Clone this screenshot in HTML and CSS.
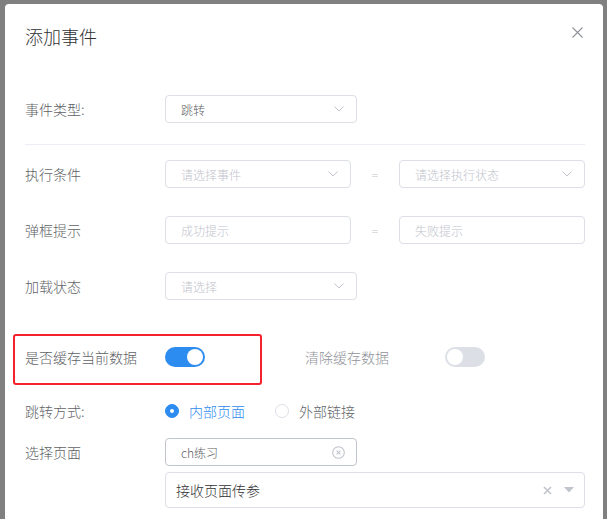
FILE: index.html
```html
<!DOCTYPE html>
<html lang="zh">
<head>
<meta charset="utf-8">
<title>添加事件</title>
<link rel="stylesheet" href="styles.css">
</head>
<body>
<div class="dialog">
  <div class="header">
    <span class="title">添加事件</span>
    <svg class="close" width="11" height="11" viewBox="0 0 11 11"><path d="M0.5 0.5L10.5 10.5M10.5 0.5L0.5 10.5" stroke="#909399" stroke-width="1.1" fill="none"/></svg>
  </div>

  <div class="row r1">
    <span class="label">事件类型:</span>
    <div class="select w192"><span class="val">跳转</span><svg class="chev" width="10" height="6" viewBox="0 0 10 6"><path d="M0.5 0.5L5 5L9.5 0.5" stroke="#c0c4cc" stroke-width="1" fill="none"/></svg></div>
  </div>

  <div class="divider"></div>

  <div class="row r2">
    <span class="label">执行条件</span>
    <div class="select w186"><span class="ph">请选择事件</span><svg class="chev" width="10" height="6" viewBox="0 0 10 6"><path d="M0.5 0.5L5 5L9.5 0.5" stroke="#c0c4cc" stroke-width="1" fill="none"/></svg></div>
    <span class="eq">=</span>
    <div class="select w186"><span class="ph">请选择执行状态</span><svg class="chev" width="10" height="6" viewBox="0 0 10 6"><path d="M0.5 0.5L5 5L9.5 0.5" stroke="#c0c4cc" stroke-width="1" fill="none"/></svg></div>
  </div>

  <div class="row r3">
    <span class="label">弹框提示</span>
    <div class="select w186"><span class="ph">成功提示</span></div>
    <span class="eq">=</span>
    <div class="select w186"><span class="ph">失败提示</span></div>
  </div>

  <div class="row r3">
    <span class="label">加载状态</span>
    <div class="select w192"><span class="ph">请选择</span><svg class="chev" width="10" height="6" viewBox="0 0 10 6"><path d="M0.5 0.5L5 5L9.5 0.5" stroke="#c0c4cc" stroke-width="1" fill="none"/></svg></div>
  </div>

  <div class="row r5">
    <div class="mark"></div>
    <span class="label">是否缓存当前数据</span>
    <span class="switch on"><span class="knob"></span></span>
    <span class="label light second">清除缓存数据</span>
    <span class="switch"><span class="knob"></span></span>
  </div>

  <div class="row r6">
    <span class="label">跳转方式:</span>
    <span class="radio checked"></span><span class="rtext active">内部页面</span>
    <span class="radio"></span><span class="rtext">外部链接</span>
  </div>

  <div class="row r7">
    <span class="label">选择页面</span>
    <div class="select w192 dark"><span class="val">ch练习</span><svg class="clear" width="13" height="13" viewBox="0 0 13 13"><circle cx="6.5" cy="6.5" r="5.8" stroke="#c0c4cc" stroke-width="1.1" fill="none"/><path d="M4.6 4.6L8.4 8.4M8.4 4.6L4.6 8.4" stroke="#c0c4cc" stroke-width="1.1"/></svg></div>
  </div>

  <div class="row r8">
    <div class="bigselect">
      <span class="bval">接收页面传参</span>
      <span class="icons">
        <svg width="9" height="9" viewBox="0 0 9 9"><path d="M1 1L8 8M8 1L1 8" stroke="#c0c4cc" stroke-width="1.6"/></svg>
        <svg width="10" height="6" viewBox="0 0 10 6"><path d="M0 0H10L5 5.5Z" fill="#c0c4cc"/></svg>
      </span>
    </div>
  </div>
</div>
</body>
</html>
```

FILE: styles.css
```css
html, body {
  margin: 0;
  padding: 0;
  background: #808080;
  height: 100%;
  overflow: hidden;
}
body {
  font-family: "Noto Sans CJK SC", "Noto Sans", sans-serif;
  font-weight: 300;
  padding: 4px 4px 0 5px;
  box-sizing: border-box;
}
.dialog {
  background: #fff;
  height: 515px;
  border-radius: 4px 4px 0 0;
  padding: 0 18px 0 20px;
  box-sizing: border-box;
}
.header {
  display: flex;
  justify-content: space-between;
  align-items: flex-start;
  padding-top: 20px;
  padding-right: 2px;
}
.title {
  font-size: 18px;
  line-height: 24px;
  color: #303133;
}
.close {
  margin-top: 3px;
}
.row {
  display: flex;
  align-items: center;
}
.label {
  width: 140px;
  flex: none;
  font-size: 14px;
  color: #606266;
  line-height: 20px;
}
.label.light {
  color: #909399;
}
.label.second {
  margin-left: 100px;
}
.r1 { margin-top: 47px; }
.divider {
  height: 1px;
  background: #ebeef5;
  margin-top: 21px;
}
.r2 { margin-top: 15px; }
.r3 { margin-top: 28px; }
.select {
  height: 28px;
  box-sizing: border-box;
  border: 1px solid #dcdfe6;
  border-radius: 4px;
  display: flex;
  align-items: center;
  justify-content: space-between;
  padding: 0 12px 0 15px;
  font-size: 12px;
  flex: none;
}
.select.dark {
  border-color: #c0c4cc;
}
.w192 { width: 192px; }
.w186 { width: 186px; }
.ph { color: #c0c4cc; }
.val { color: #606266; }
.chev { flex: none; }
.clear { flex: none; margin-right: -1px; }
.eq {
  width: 48px;
  text-align: center;
  font-size: 12px;
  color: #c0c4cc;
}
.r5 {
  margin-top: 47px;
  position: relative;
}
.mark {
  position: absolute;
  left: -12px;
  top: -13px;
  width: 249px;
  height: 51px;
  box-sizing: border-box;
  border: 2px solid #f5222d;
  border-radius: 3px;
}
.switch {
  width: 40px;
  height: 20px;
  border-radius: 10px;
  background: #dcdfe6;
  position: relative;
  flex: none;
}
.switch.on {
  background: #2d8cf0;
}
.knob {
  position: absolute;
  top: 2px;
  left: 2px;
  width: 16px;
  height: 16px;
  border-radius: 50%;
  background: #fff;
}
.switch.on .knob {
  left: 22px;
}
.r6 { margin-top: 34px; }
.radio {
  width: 14px;
  height: 14px;
  box-sizing: border-box;
  border-radius: 50%;
  border: 1px solid #dcdfe6;
  background: #fff;
  flex: none;
  position: relative;
}
.radio.checked {
  border-color: #2d8cf0;
  background: #2d8cf0;
}
.radio.checked::after {
  content: "";
  position: absolute;
  width: 4px;
  height: 4px;
  border-radius: 50%;
  background: #fff;
  left: 4px;
  top: 4px;
}
.rtext {
  font-size: 14px;
  color: #606266;
  margin-left: 10px;
  margin-right: 30px;
  line-height: 20px;
}
.rtext.active { color: #2d8cf0; }
.r7 { margin-top: 17px; }
.r8 {
  margin-top: 6px;
  padding-left: 140px;
}
.bigselect {
  flex: 1;
  height: 36px;
  box-sizing: border-box;
  border: 1px solid #dcdfe6;
  border-radius: 4px;
  display: flex;
  align-items: center;
  justify-content: space-between;
  padding: 0 10px 0 10px;
}
.bval {
  font-size: 14px;
  color: #303133;
}
.icons {
  display: flex;
  align-items: center;
  gap: 12px;
}
```
